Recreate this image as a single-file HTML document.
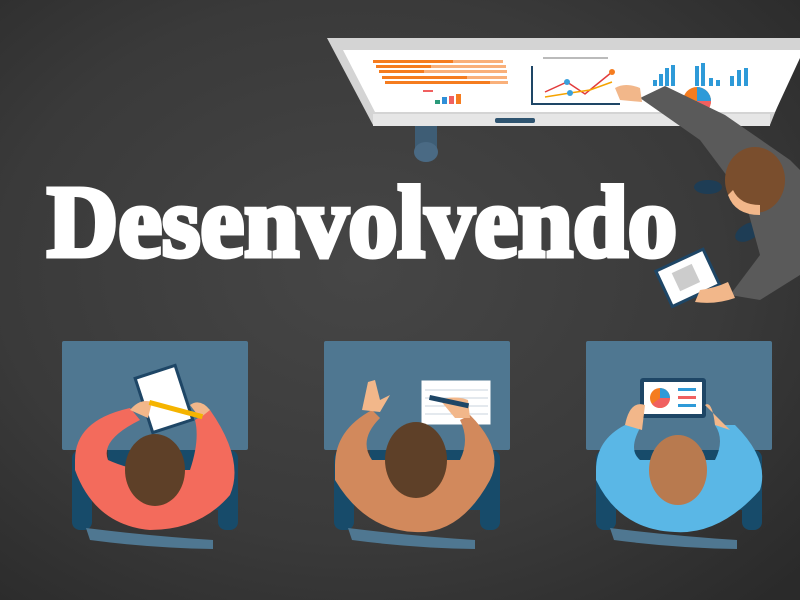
<!DOCTYPE html>
<html><head><meta charset="utf-8"><style>
html,body{margin:0;padding:0;width:800px;height:600px;overflow:hidden;background:#3a3a3a}
svg{display:block}
</style></head><body>
<svg width="800" height="600" viewBox="0 0 800 600" xmlns="http://www.w3.org/2000/svg">
<defs>
<radialGradient id="bg" cx="0.45" cy="0.45" r="0.75">
<stop offset="0" stop-color="#464646"/><stop offset="0.6" stop-color="#3a3a3a"/><stop offset="1" stop-color="#2a2a2a"/>
</radialGradient>
</defs>
<rect width="800" height="600" fill="url(#bg)"/>

<!-- whiteboard stand -->
<rect x="415" y="122" width="22" height="30" fill="#3e5d75"/>
<ellipse cx="426" cy="152" rx="12" ry="10" fill="#4a6a84"/>
<!-- board -->
<polygon points="327,38 800,38 800,50 770,125 373,125" fill="#d4d4d4"/>
<polygon points="343,50 800,50 800,58 775,112 375,112" fill="#ffffff"/>
<rect x="373" y="114" width="397" height="12" fill="#e6e6e6"/>
<rect x="495" y="118" width="40" height="5" rx="2" fill="#2e5470"/>
<g fill="#f57c1f">
<rect x="373" y="60" width="80" height="3"/><rect x="376" y="65" width="55" height="3"/><rect x="379" y="70" width="45" height="3"/><rect x="382" y="76" width="85" height="3"/><rect x="385" y="81" width="105" height="3"/>
</g>
<g fill="#f9b07a"><rect x="453" y="60" width="50" height="3"/><rect x="431" y="65" width="75" height="3"/><rect x="424" y="70" width="83" height="3"/><rect x="467" y="76" width="40" height="3"/><rect x="490" y="81" width="18" height="3"/></g>
<rect x="423" y="90" width="10" height="2" fill="#f06060"/>
<rect x="435" y="100" width="5" height="4" fill="#2a9a7a"/><rect x="442" y="97" width="5" height="7" fill="#2f8fd8"/><rect x="449" y="96" width="5" height="8" fill="#f06060"/><rect x="456" y="94" width="5" height="10" fill="#f57c1f"/>
<path d="M532 66 V104 H620" stroke="#1e4666" stroke-width="2" fill="none"/>
<path d="M545 92 L567 82 L585 94 L612 72" stroke="#e23b3b" stroke-width="1.5" fill="none"/>
<path d="M545 97 L570 93 L590 90 L612 82" stroke="#f5a300" stroke-width="1.5" fill="none"/>
<circle cx="567" cy="82" r="3" fill="#3aa0dc"/><circle cx="612" cy="72" r="3" fill="#f57c1f"/><circle cx="570" cy="93" r="3" fill="#3aa0dc"/>
<rect x="543" y="57" width="65" height="2" fill="#bbb"/>
<g fill="#2e9ad8"><rect x="653" y="80" width="4" height="6"/><rect x="659" y="74" width="4" height="12"/><rect x="665" y="68" width="4" height="18"/><rect x="671" y="65" width="4" height="21"/><rect x="695" y="66" width="4" height="20"/><rect x="701" y="63" width="4" height="23"/><rect x="709" y="78" width="4" height="8"/><rect x="716" y="80" width="4" height="6"/><rect x="730" y="76" width="4" height="10"/><rect x="737" y="70" width="4" height="16"/><rect x="744" y="68" width="4" height="18"/></g>
<circle cx="697" cy="101" r="14" fill="#f57c1f"/><path d="M697 101 L697 87 A14 14 0 0 1 711 101 Z" fill="#2e9ad8"/><path d="M697 101 L711 101 A14 14 0 0 1 697 115 Z" fill="#f06060"/><path d="M697 101 L697 115 A14 14 0 0 1 685 108 Z" fill="#2a9a7a"/>

<!-- teacher -->
<ellipse cx="708" cy="187" rx="14" ry="7" fill="#1e3d55"/>
<ellipse cx="748" cy="232" rx="14" ry="8" fill="#1e3d55" transform="rotate(-30 748 232)"/>
<path d="M640 98 L665 86 L725 115 L790 160 L800 170 L800 275 L760 300 L730 295 L760 255 L745 200 L700 140 Z" fill="#5a5a5a"/>
<path d="M615 88 Q625 82 640 88 L642 102 L620 100 Z" fill="#f2b78a"/>
<ellipse cx="755" cy="180" rx="30" ry="33" fill="#7a4e2d"/>
<path d="M728 195 Q735 215 760 215 L760 205 Q740 205 733 190Z" fill="#f2b78a"/>
<g transform="rotate(-25 685 278)"><rect x="660" y="258" width="55" height="42" fill="#1e4666"/><rect x="663" y="261" width="49" height="36" fill="#fff"/><rect x="675" y="268" width="22" height="20" fill="#ccc"/></g>
<path d="M700 290 Q715 288 728 282 L735 298 Q715 305 695 302Z" fill="#f2b78a"/>

<!-- title -->
<text x="47" y="256" font-family="'Liberation Serif',serif" font-weight="bold" font-size="102" fill="#ffffff" stroke="#ffffff" stroke-width="5" stroke-linejoin="miter" textLength="630" lengthAdjust="spacingAndGlyphs">Desenvolvendo</text>

<g id="s1">
<rect x="62" y="341" width="186" height="109" rx="2" fill="#4f7791"/>
<rect x="108" y="450" width="120" height="60" fill="#174b6a"/>
<rect x="72" y="450" width="20" height="80" rx="8" fill="#174b6a"/>
<rect x="218" y="450" width="20" height="80" rx="8" fill="#174b6a"/>
<path d="M86 528 Q150 536 213 540 L213 549 Q150 548 90 540 Z" fill="#4f7791"/>
</g>
<use href="#s1" x="262"/>
<use href="#s1" x="524"/>

<!-- student 1 -->
<g transform="rotate(-18 160 395)"><rect x="140" y="370" width="45" height="60" fill="#1e4666"/><rect x="143" y="373" width="39" height="54" fill="#fff"/></g>
<path d="M75 460 Q75 420 130 408 L140 420 Q100 440 108 460 Q130 470 150 470 L190 470 Q200 440 195 420 L210 410 Q245 460 230 495 Q200 530 150 530 Q95 525 75 470Z" fill="#f36b5c"/>
<ellipse cx="155" cy="470" rx="30" ry="36" fill="#5e4028"/>
<path d="M130 410 Q140 398 152 402 L148 418 Z" fill="#f2b78a"/><path d="M190 405 Q200 398 210 410 L200 418Z" fill="#f2b78a"/>
<rect x="150" y="400" width="55" height="5" fill="#f5b400" transform="rotate(15 150 400)"/>

<!-- student 2 -->
<rect x="421" y="380" width="70" height="45" fill="#fff" stroke="#4f7791" stroke-width="1"/>
<g stroke="#c9d3dc" stroke-width="1"><line x1="425" y1="390" x2="488" y2="390"/><line x1="425" y1="398" x2="488" y2="398"/><line x1="425" y1="406" x2="488" y2="406"/><line x1="425" y1="414" x2="488" y2="414"/></g>
<path d="M335 465 Q335 430 372 410 L380 418 Q358 440 372 460 L460 460 Q470 440 460 420 L470 415 Q505 450 490 480 Q460 535 415 532 Q365 530 335 480Z" fill="#d2895c"/>
<ellipse cx="416" cy="460" rx="31" ry="38" fill="#5e4028"/>
<path d="M362 410 L368 382 L375 380 L380 400 L390 395 L380 412Z" fill="#f2b78a"/>
<path d="M440 400 Q455 395 468 400 L470 418 L455 418Z" fill="#f2b78a"/>
<rect x="430" y="395" width="40" height="5" fill="#1e4666" transform="rotate(12 430 395)"/>

<!-- student 3 -->
<rect x="640" y="378" width="66" height="40" rx="3" fill="#1e4666"/><rect x="644" y="382" width="58" height="32" fill="#fff"/>
<circle cx="660" cy="398" r="10" fill="#f57c1f"/><path d="M660 398 L660 388 A10 10 0 0 1 670 398Z" fill="#2e9ad8"/><path d="M660 398 L670 398 A10 10 0 0 1 652 404Z" fill="#f06060"/>
<rect x="678" y="388" width="18" height="3" fill="#2e9ad8"/><rect x="678" y="396" width="18" height="3" fill="#f06060"/><rect x="678" y="404" width="18" height="3" fill="#2e9ad8"/>
<path d="M596 470 Q596 440 625 425 L640 428 Q628 450 640 460 L715 460 Q725 440 715 425 L735 425 Q770 460 760 490 Q720 535 675 532 Q620 530 596 480Z" fill="#5ab7e6"/>
<ellipse cx="678" cy="470" rx="29" ry="35" fill="#b87a4f"/>
<path d="M625 425 Q630 400 645 405 L642 430Z" fill="#f2b78a"/><path d="M715 425 Q712 400 705 405 L730 430Z" fill="#f2b78a"/>
</svg>
</body></html>
